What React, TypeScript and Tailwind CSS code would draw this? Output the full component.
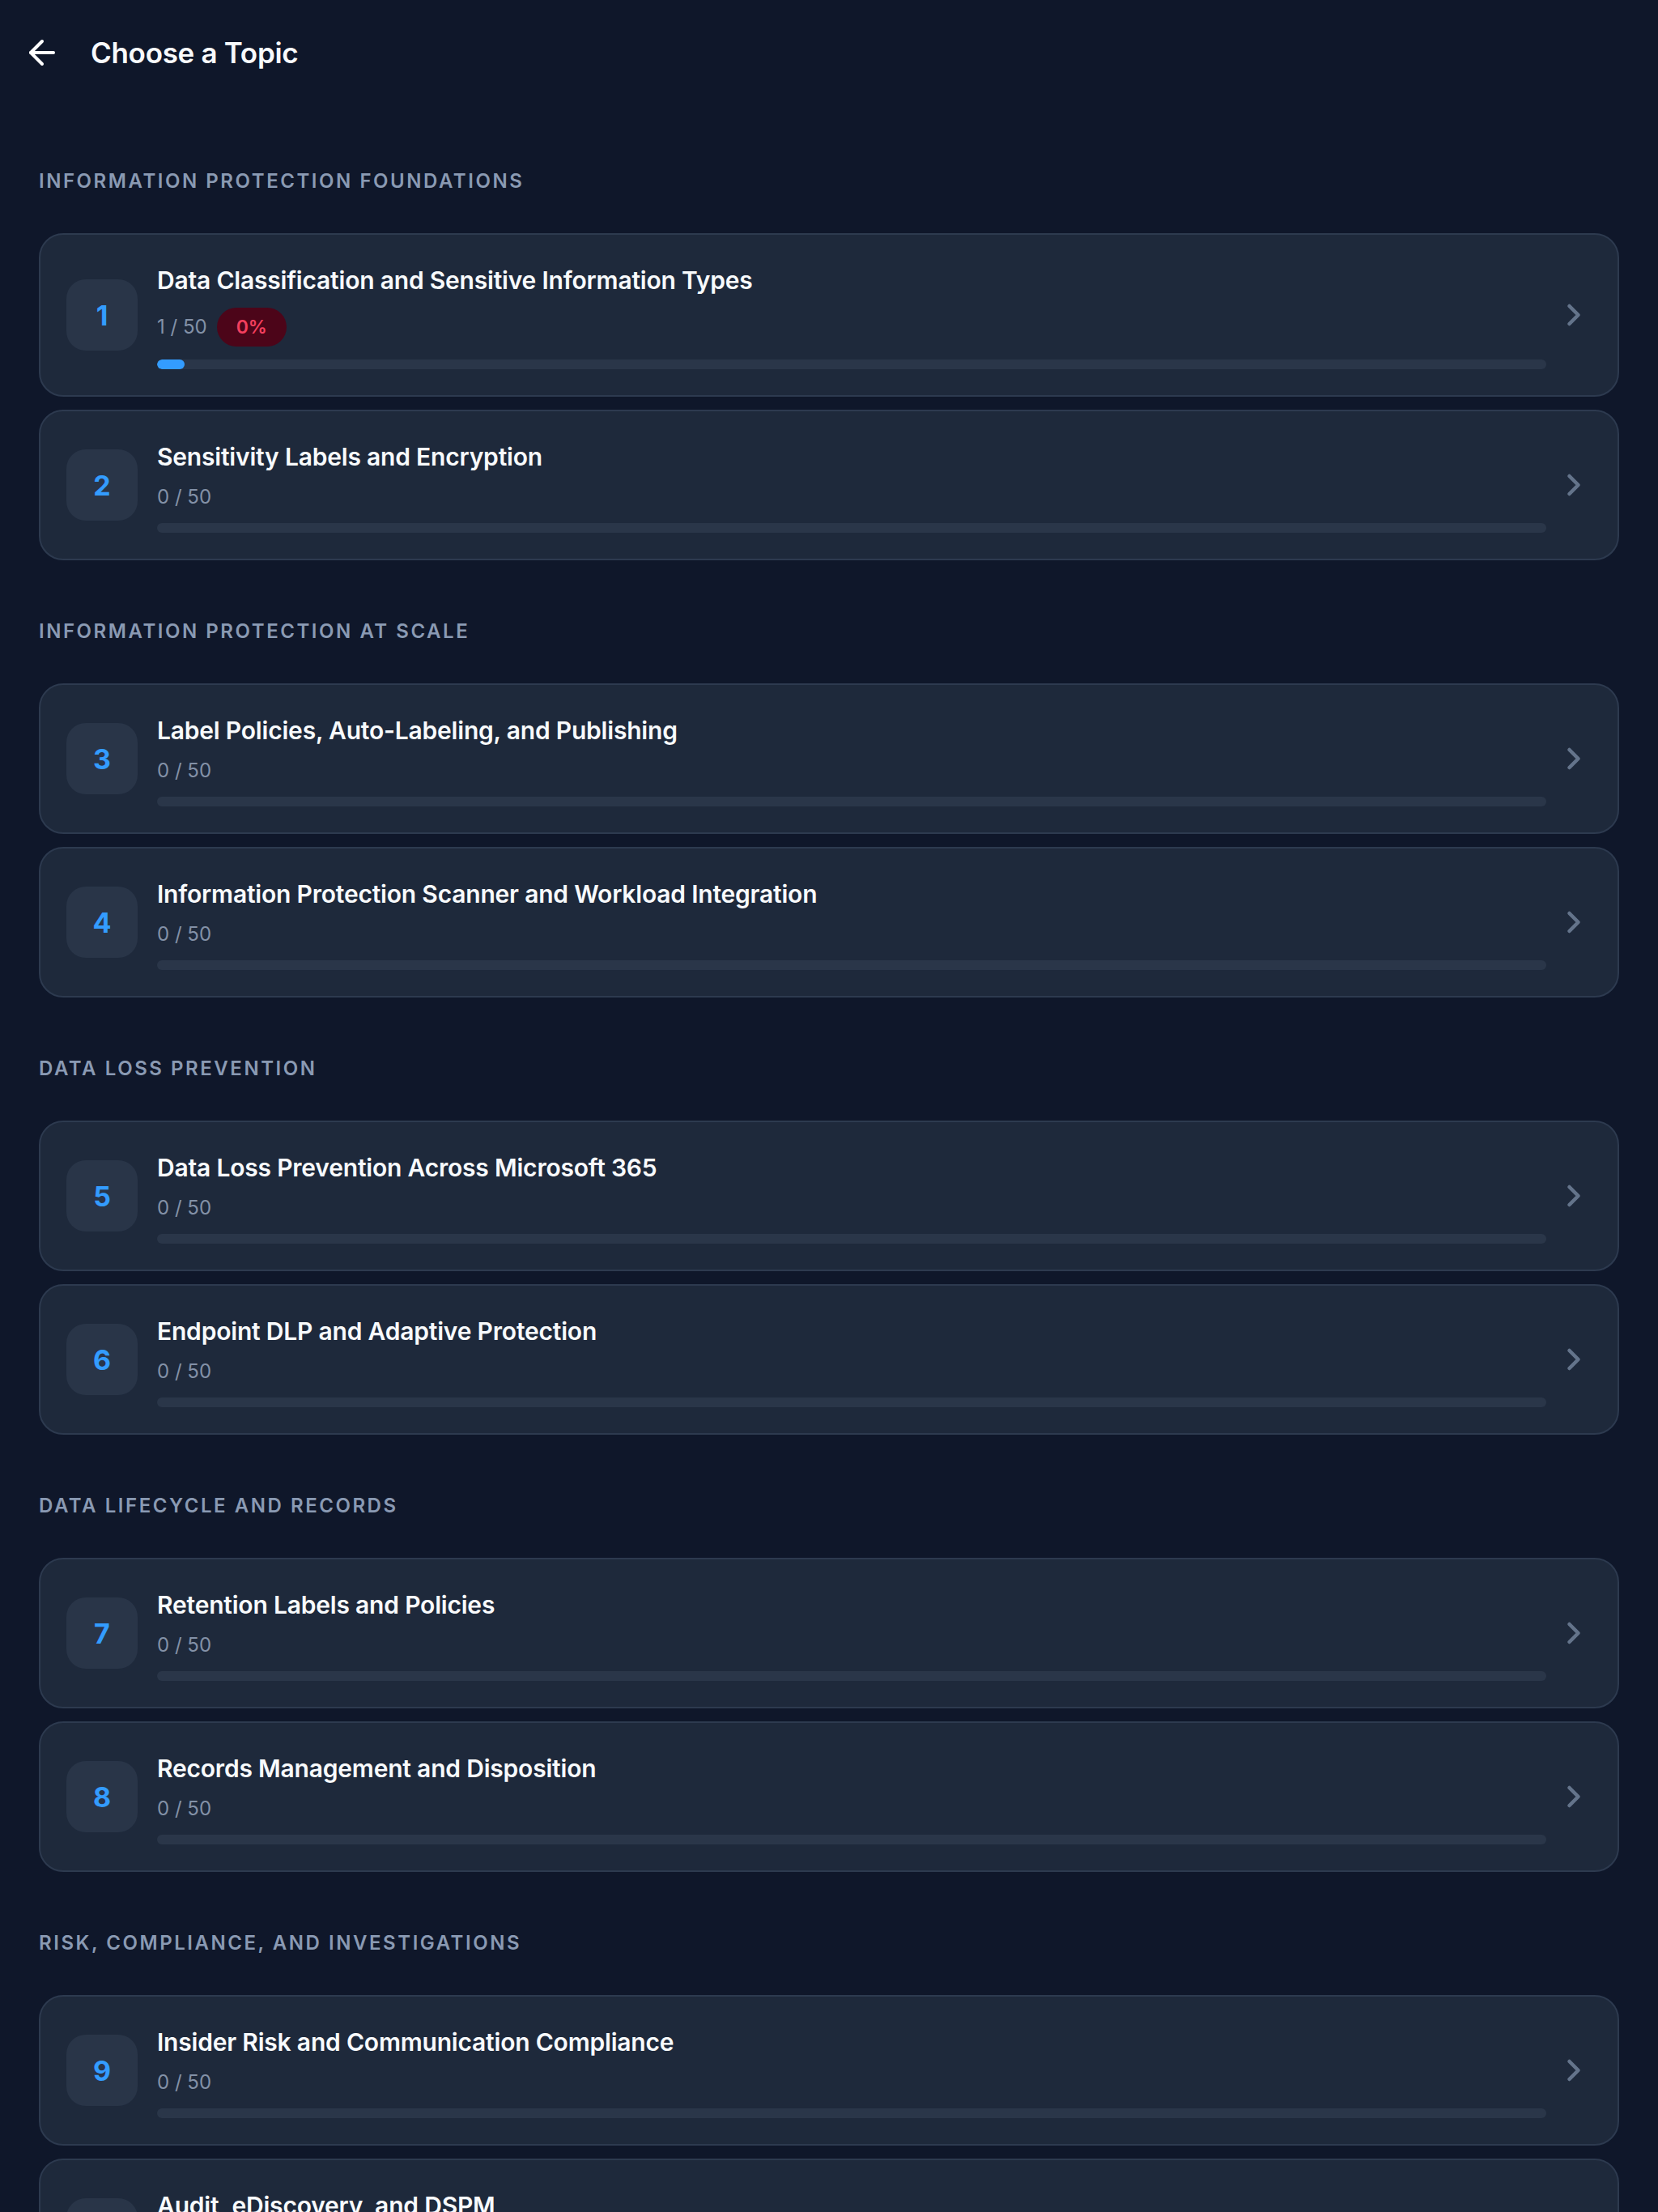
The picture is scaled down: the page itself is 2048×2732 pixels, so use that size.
import React from "react";
import { ArrowLeft, ChevronRight } from "lucide-react";

interface Topic {
  id: number;
  title: string;
  done: number;
  total: number;
}

interface Section {
  name: string;
  topics: Topic[];
}

const sections: Section[] = [
  {
    name: "Information Protection Foundations",
    topics: [
      { id: 1, title: "Data Classification and Sensitive Information Types", done: 1, total: 50 },
      { id: 2, title: "Sensitivity Labels and Encryption", done: 0, total: 50 },
    ],
  },
  {
    name: "Information Protection at Scale",
    topics: [
      { id: 3, title: "Label Policies, Auto-Labeling, and Publishing", done: 0, total: 50 },
      { id: 4, title: "Information Protection Scanner and Workload Integration", done: 0, total: 50 },
    ],
  },
  {
    name: "Data Loss Prevention",
    topics: [
      { id: 5, title: "Data Loss Prevention Across Microsoft 365", done: 0, total: 50 },
      { id: 6, title: "Endpoint DLP and Adaptive Protection", done: 0, total: 50 },
    ],
  },
  {
    name: "Data Lifecycle and Records",
    topics: [
      { id: 7, title: "Retention Labels and Policies", done: 0, total: 50 },
      { id: 8, title: "Records Management and Disposition", done: 0, total: 50 },
    ],
  },
  {
    name: "Risk, Compliance, and Investigations",
    topics: [
      { id: 9, title: "Insider Risk and Communication Compliance", done: 0, total: 50 },
      { id: 10, title: "Audit, eDiscovery, and DSPM", done: 0, total: 50 },
    ],
  },
];

const TopicCard: React.FC<{ topic: Topic }> = ({ topic }) => {
  const pct = (topic.done / topic.total) * 100;
  const started = topic.done > 0;

  return (
    <button className="flex w-full items-center gap-6 rounded-[30px] border-2 border-[#2d3a4f] bg-[#1e293b] py-8 pl-8 pr-8 text-left">
      <div className="flex h-[88px] w-[88px] shrink-0 items-center justify-center rounded-[24px] bg-[#293548] text-[34px] font-bold text-[#339cff]">
        {topic.id}
      </div>
      <div className="flex min-w-0 flex-1 items-center gap-3">
        <div className="min-w-0 flex-1">
          <div className="pt-[3px] text-[30px] font-semibold leading-[42px] tracking-[-0.2px] text-[#f8fafc]">
            {topic.title}
          </div>
          <div className="mt-[13px] flex items-center gap-3">
            <span className="text-[24px] leading-8 text-[#8391a7]">
              {topic.done} / {topic.total}
            </span>
            {started && (
              <span className="rounded-full bg-[#4c0519] px-6 py-3 text-[23px] font-semibold leading-6 text-[#f43f5e]">
                0%
              </span>
            )}
          </div>
          <div className="mt-4 h-3 w-full overflow-hidden rounded-full bg-[#2a3649]">
            <div className="h-full rounded-full bg-[#339cff]" style={{ width: `${pct}%` }} />
          </div>
        </div>
        <ChevronRight size={44} strokeWidth={2.5} className="shrink-0 text-[#64748b]" />
      </div>
    </button>
  );
};

export default function App() {
  return (
    <div className="h-[2732px] overflow-hidden bg-[#0f172a] font-['Inter','Noto_Sans',sans-serif]">
      <header className="flex h-[128px] items-center gap-9 pl-7 pt-[2px]">
        <ArrowLeft size={48} strokeWidth={2} className="text-white" />
        <h1 className="text-[35px] font-semibold tracking-[-0.3px] text-[#f8fafc]">Choose a Topic</h1>
      </header>

      <main className="px-12 pt-20">
        {sections.map((section, i) => (
          <section key={section.name} className={i > 0 ? "mt-[72px]" : ""}>
            <h2 className="text-[24px] font-semibold uppercase leading-8 tracking-[0.106em] text-[#8a9ab3]">
              {section.name}
            </h2>
            <div className="mt-12 flex flex-col gap-4">
              {section.topics.map((t) => (
                <TopicCard key={t.id} topic={t} />
              ))}
            </div>
          </section>
        ))}
      </main>
    </div>
  );
}
